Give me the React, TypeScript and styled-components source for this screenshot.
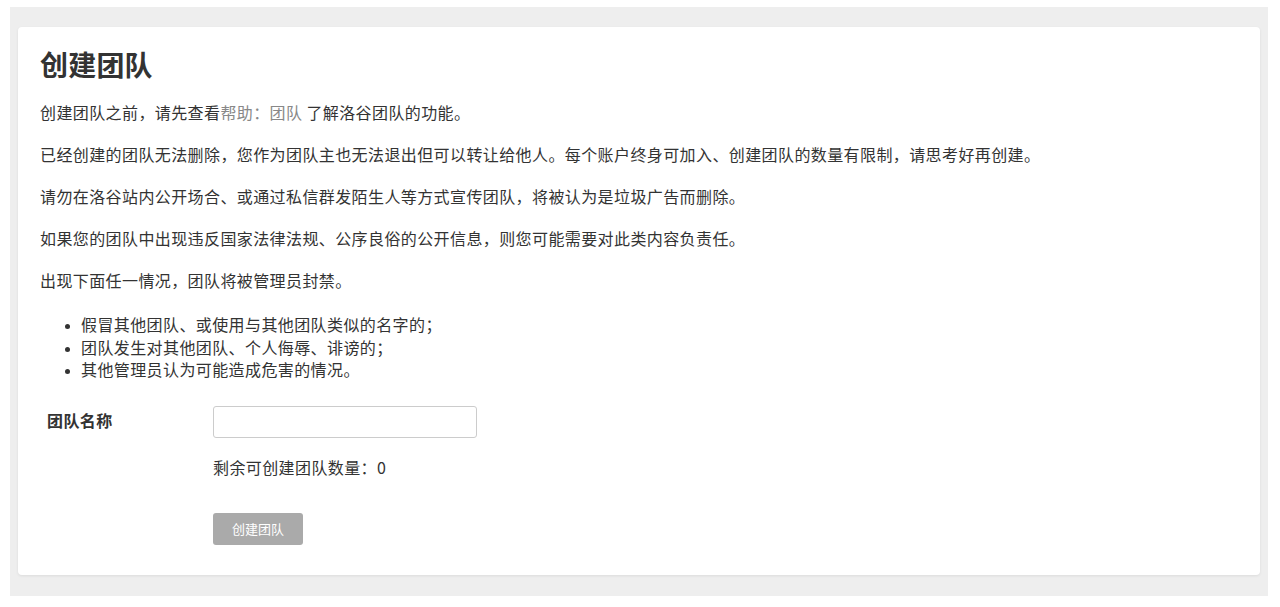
import React, { useState } from "react";
import styled, { createGlobalStyle } from "styled-components";

const GlobalStyle = createGlobalStyle`
  html, body {
    margin: 0;
    padding: 0;
    background: #ffffff;
  }
  body {
    font-family: "Noto Sans CJK SC", "Noto Sans", "Liberation Sans", sans-serif;
    color: #333333;
  }
`;

const Page = styled.div`
  margin: 7px 12px 11px 10px;
  padding: 20px 8px 21px 8px;
  background: #eeeeee;
`;

const Card = styled.div`
  background: #ffffff;
  border-radius: 4px;
  box-shadow: 0 1px 3px rgba(0, 0, 0, 0.08);
  padding: 18px 22px 30px 22px;

  h2 {
    margin: 0 0 17px;
    font-size: 28px;
    line-height: 38px;
    font-weight: 700;
    color: #333333;
    letter-spacing: 0.2px;
  }
`;

const Paragraph = styled.p<{ $last?: boolean }>`
  margin: 0 0 ${(p) => (p.$last ? 0 : 18)}px;
  font-size: 16px;
  line-height: 24px;
  letter-spacing: 0.4px;
  color: #333333;
`;

const HelpLink = styled.a`
  color: #888888;
  text-decoration: none;
`;

const RuleList = styled.ul`
  margin: 21px 0 0;
  padding-left: 41px;
  font-size: 16px;
  line-height: 22.5px;
  letter-spacing: 0.4px;
  color: #333333;

  li::marker {
    font-size: 12px;
  }
`;

const FormRow = styled.div<{ $gap: number }>`
  display: grid;
  grid-template-columns: 166px 1fr;
  align-items: center;
  padding-left: 7px;
  margin-top: ${(p) => p.$gap}px;
`;

const Label = styled.label`
  font-size: 16px;
  font-weight: 700;
  letter-spacing: 0.4px;
  line-height: 24px;
  align-self: start;
  padding-top: 2px;
`;

const NameInput = styled.input`
  box-sizing: border-box;
  width: 264px;
  height: 32px;
  border: 1px solid #cccccc;
  border-radius: 3px;
  padding: 0 8px;
  font-size: 15px;
  font-family: inherit;
  outline: none;
`;

const Hint = styled.div`
  font-size: 16px;
  line-height: 24px;
  letter-spacing: 0.4px;
  color: #333333;
`;

const SubmitButton = styled.button`
  box-sizing: border-box;
  width: 90px;
  height: 32px;
  border: none;
  border-radius: 3px;
  background: #aaaaaa;
  color: #ffffff;
  font-family: inherit;
  font-size: 13px;
  cursor: not-allowed;
`;

const rules = [
  "假冒其他团队、或使用与其他团队类似的名字的；",
  "团队发生对其他团队、个人侮辱、诽谤的；",
  "其他管理员认为可能造成危害的情况。",
];

const App: React.FC = () => {
  const [name, setName] = useState("");
  const remaining = 0;

  return (
    <>
      <GlobalStyle />
      <Page>
        <Card>
          <h2>创建团队</h2>
          <Paragraph>
            创建团队之前，请先查看<HelpLink href="#">帮助：团队</HelpLink> 了解洛谷团队的功能。
          </Paragraph>
          <Paragraph>
            已经创建的团队无法删除，您作为团队主也无法退出但可以转让给他人。每个账户终身可加入、创建团队的数量有限制，请思考好再创建。
          </Paragraph>
          <Paragraph>
            请勿在洛谷站内公开场合、或通过私信群发陌生人等方式宣传团队，将被认为是垃圾广告而删除。
          </Paragraph>
          <Paragraph>
            如果您的团队中出现违反国家法律法规、公序良俗的公开信息，则您可能需要对此类内容负责任。
          </Paragraph>
          <Paragraph $last>出现下面任一情况，团队将被管理员封禁。</Paragraph>
          <RuleList>
            {rules.map((r) => (
              <li key={r}>{r}</li>
            ))}
          </RuleList>

          <FormRow $gap={25}>
            <Label>团队名称</Label>
            <NameInput value={name} onChange={(e) => setName(e.target.value)} />
          </FormRow>
          <FormRow $gap={17}>
            <span />
            <Hint>剩余可创建团队数量：{remaining}</Hint>
          </FormRow>
          <FormRow $gap={34}>
            <span />
            <div>
              <SubmitButton disabled>创建团队</SubmitButton>
            </div>
          </FormRow>
        </Card>
      </Page>
    </>
  );
};

export default App;
